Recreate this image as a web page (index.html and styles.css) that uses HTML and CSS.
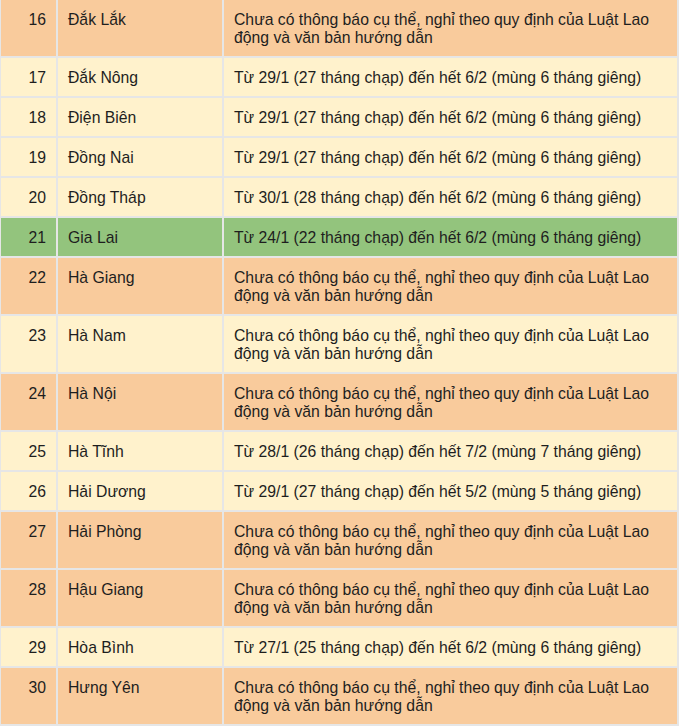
FILE: index.html
```html
<!DOCTYPE html>
<html lang="vi">
<head>
<meta charset="utf-8">
<link rel="stylesheet" href="styles.css">
</head>
<body>
<table class="holiday">
  <colgroup>
    <col class="c-no">
    <col class="c-prov">
    <col class="c-info">
  </colgroup>
  <tbody>
    <tr class="peach"><td class="no">16</td><td>Đắk Lắk</td><td>Chưa có thông báo cụ thể, nghỉ theo quy định của Luật Lao động và văn bản hướng dẫn</td></tr>
    <tr class="cream"><td class="no">17</td><td>Đắk Nông</td><td>Từ 29/1 (27 tháng chạp) đến hết 6/2 (mùng 6 tháng giêng)</td></tr>
    <tr class="cream"><td class="no">18</td><td>Điện Biên</td><td>Từ 29/1 (27 tháng chạp) đến hết 6/2 (mùng 6 tháng giêng)</td></tr>
    <tr class="cream"><td class="no">19</td><td>Đồng Nai</td><td>Từ 29/1 (27 tháng chạp) đến hết 6/2 (mùng 6 tháng giêng)</td></tr>
    <tr class="cream"><td class="no">20</td><td>Đồng Tháp</td><td>Từ 30/1 (28 tháng chạp) đến hết 6/2 (mùng 6 tháng giêng)</td></tr>
    <tr class="green"><td class="no">21</td><td>Gia Lai</td><td>Từ 24/1 (22 tháng chạp) đến hết 6/2 (mùng 6 tháng giêng)</td></tr>
    <tr class="peach"><td class="no">22</td><td>Hà Giang</td><td>Chưa có thông báo cụ thể, nghỉ theo quy định của Luật Lao động và văn bản hướng dẫn</td></tr>
    <tr class="cream"><td class="no">23</td><td>Hà Nam</td><td>Chưa có thông báo cụ thể, nghỉ theo quy định của Luật Lao động và văn bản hướng dẫn</td></tr>
    <tr class="peach"><td class="no">24</td><td>Hà Nội</td><td>Chưa có thông báo cụ thể, nghỉ theo quy định của Luật Lao động và văn bản hướng dẫn</td></tr>
    <tr class="cream"><td class="no">25</td><td>Hà Tĩnh</td><td>Từ 28/1 (26 tháng chạp) đến hết 7/2 (mùng 7 tháng giêng)</td></tr>
    <tr class="cream"><td class="no">26</td><td>Hải Dương</td><td>Từ 29/1 (27 tháng chạp) đến hết 5/2 (mùng 5 tháng giêng)</td></tr>
    <tr class="peach"><td class="no">27</td><td>Hải Phòng</td><td>Chưa có thông báo cụ thể, nghỉ theo quy định của Luật Lao động và văn bản hướng dẫn</td></tr>
    <tr class="peach"><td class="no">28</td><td>Hậu Giang</td><td>Chưa có thông báo cụ thể, nghỉ theo quy định của Luật Lao động và văn bản hướng dẫn</td></tr>
    <tr class="cream"><td class="no">29</td><td>Hòa Bình</td><td>Từ 27/1 (25 tháng chạp) đến hết 6/2 (mùng 6 tháng giêng)</td></tr>
    <tr class="peach"><td class="no">30</td><td>Hưng Yên</td><td>Chưa có thông báo cụ thể, nghỉ theo quy định của Luật Lao động và văn bản hướng dẫn</td></tr>
  </tbody>
</table>
</body>
</html>
```
FILE: styles.css
```css
html, body {
  margin: 0;
  padding: 0;
  background: #ffffff;
}

.holiday {
  width: 680px;
  margin: -2px 0 0 -1px;
  border-collapse: separate;
  border-spacing: 2px;
  background: #e6e6e6;
  table-layout: fixed;
  font-family: "Liberation Sans", Arial, sans-serif;
  font-size: 15.75px;
  line-height: 18px;
  color: #1e1e1e;
}

.c-no { width: 55px; }
.c-prov { width: 164px; }

.holiday td {
  padding: 11px 10px 9px;
  vertical-align: top;
  text-align: left;
}

.holiday td.no {
  text-align: right;
}

.peach td { background: #f9cb9c; }
.cream td { background: #fff2cc; }
.green td { background: #93c47d; }
```
